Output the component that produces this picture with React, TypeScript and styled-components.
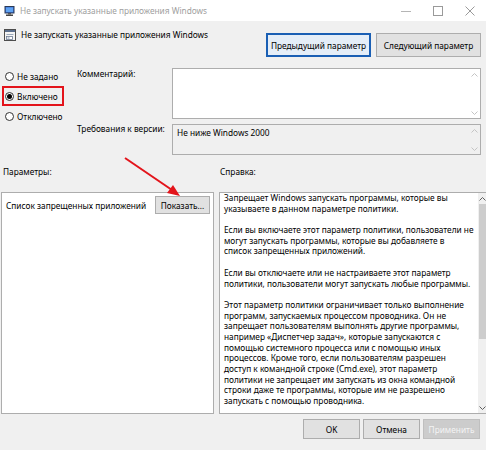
import React from 'react'
import styled, { createGlobalStyle } from 'styled-components'

const GlobalStyle = createGlobalStyle`
  html, body {
    margin: 0;
    padding: 0;
    background: #f0f0f0;
  }
  body {
    font-family: 'Noto Sans', 'Open Sans', sans-serif;
    font-size: 8.3px;
    color: #000;
  }
`

const Window = styled.div`
  position: relative;
  width: 486px;
  height: 450px;
  background: #f0f0f0;
  display: flex;
  flex-direction: column;
  overflow: hidden;
`

const TitleBar = styled.div`
  height: 21px;
  background: #fff;
  display: flex;
  align-items: center;
  padding-left: 4px;
`
const TitleText = styled.span`
  flex: 1;
  margin-left: 5px;
  color: #a0a0a0;
  white-space: nowrap;
`
const WinControls = styled.div`
  display: flex;
  height: 100%;
`
const WinButton = styled.div`
  width: 32px;
  display: flex;
  align-items: center;
  justify-content: center;
`

const Header = styled.div`
  height: 45px;
  display: flex;
  justify-content: space-between;
  padding: 0 5px 0 4px;
`
const HeaderTitle = styled.div`
  display: flex;
  align-items: center;
  gap: 5px;
  height: 13px;
  margin-top: 7px;
  white-space: nowrap;
`
const NavButtons = styled.div`
  display: flex;
  gap: 5px;
  margin-top: 12px;
`
const Button = styled.button<{ $focused?: boolean; $disabled?: boolean; $w: number; $h: number }>`
  width: ${({ $w }) => $w}px;
  height: ${({ $h }) => $h}px;
  padding: 0;
  font: inherit;
  color: ${({ $disabled }) => ($disabled ? '#f4f4f4' : '#000')};
  background: ${({ $focused, $disabled }) => ($disabled ? '#cccccc' : $focused ? '#e5eef8' : '#e1e1e1')};
  border: 1px solid ${({ $focused, $disabled }) => ($disabled ? '#bfbfbf' : $focused ? '#1a5fb4' : '#adadad')};
  box-shadow: ${({ $focused }) => ($focused ? 'inset 0 0 0 1px #1a5fb4' : 'none')};
  white-space: nowrap;
`

const TopSection = styled.div`
  display: flex;
  padding-right: 5px;
`
const RadioGroup = styled.div`
  width: 75px;
  padding-left: 2px;
  display: flex;
  flex-direction: column;
`
const RadioRow = styled.label<{ $marked?: boolean }>`
  height: 20px;
  box-sizing: border-box;
  width: fit-content;
  display: flex;
  align-items: center;
  gap: 3px;
  padding: 0 4px 0 1px;
  border: 2px solid ${({ $marked }) => ($marked ? '#e3141b' : 'transparent')};
  white-space: nowrap;
`
const RadioDot = styled.span<{ $checked?: boolean }>`
  width: 9px;
  height: 9px;
  box-sizing: border-box;
  border-radius: 50%;
  border: 1px solid #333;
  background: #fff;
  display: flex;
  align-items: center;
  justify-content: center;
  &::after {
    content: '';
    width: 5px;
    height: 5px;
    border-radius: 50%;
    background: ${({ $checked }) => ($checked ? '#000' : 'transparent')};
  }
`

const FieldsGrid = styled.div`
  flex: 1;
  display: grid;
  grid-template-columns: 95px 1fr;
  row-gap: 5px;
  padding-top: 2px;
`
const FieldLabel = styled.div<{ $offset: number }>`
  line-height: 11px;
  margin-top: ${({ $offset }) => $offset}px;
  white-space: nowrap;
`
const FieldBox = styled.div<{ $h: number; $readonly?: boolean }>`
  height: ${({ $h }) => $h}px;
  box-sizing: border-box;
  display: flex;
  background: ${({ $readonly }) => ($readonly ? '#f0f0f0' : '#fff')};
  border: 1px solid #adadad;
`
const FieldText = styled.div`
  flex: 1;
  padding: 2px 4px;
  line-height: 11px;
`
const MiniScroll = styled.div`
  width: 12px;
  display: flex;
  flex-direction: column;
  justify-content: space-between;
  align-items: center;
  padding: 4px 0 3px;
`

const LowerSection = styled.div`
  display: grid;
  grid-template-columns: 213px 1fr;
  grid-template-rows: 12px 222px;
  column-gap: 5px;
  row-gap: 14px;
  padding: 11px 5px 0 1px;
`
const SectionLabel = styled.div<{ $indent: number }>`
  padding-left: ${({ $indent }) => $indent}px;
  line-height: 12px;
`
const Panel = styled.div`
  background: #fff;
  border: 1px solid #adadad;
  box-sizing: border-box;
  display: flex;
  flex-direction: column;
  min-height: 0;
`
const ParamRow = styled.div`
  display: flex;
  align-items: center;
  justify-content: space-between;
  padding: 3px 3px 0 4px;
  white-space: nowrap;
`
const HelpPanel = styled(Panel)`
  flex-direction: row;
`
const HelpText = styled.div`
  flex: 1;
  padding: 0 4px;
  line-height: 10.7px;
  overflow: hidden;
`
const HelpLine = styled.div`
  height: 10.7px;
  white-space: nowrap;
`
const ScrollBar = styled.div`
  width: 10px;
  display: flex;
  flex-direction: column;
  align-items: center;
  background: #f0f0f0;
`
const ScrollArrow = styled.div`
  height: 11px;
  display: flex;
  align-items: center;
  justify-content: center;
`
const ScrollTrack = styled.div`
  flex: 1;
  width: 100%;
  display: flex;
  flex-direction: column;
`
const ScrollThumb = styled.div`
  height: 135px;
  margin: 0 1px;
  background: #cdcdcd;
`

const Footer = styled.div`
  display: flex;
  justify-content: flex-end;
  gap: 3px;
  padding: 5px 6px 0 0;
`

const Overlay = styled.svg`
  position: absolute;
  left: 0;
  top: 0;
  pointer-events: none;
`

const Chevron = ({ up, color }: { up?: boolean; color: string }) => (
  <svg width="7" height="4" viewBox="0 0 7 4">
    <path d={up ? 'M0.5 3.5 L3.5 0.5 L6.5 3.5' : 'M0.5 0.5 L3.5 3.5 L6.5 0.5'} fill="none" stroke={color} strokeWidth="1" />
  </svg>
)

const ComputerIcon = () => (
  <svg width="11" height="10" viewBox="0 0 11 10">
    <rect x="1" y="0.5" width="9" height="6.5" fill="#3a6fd8" stroke="#2b3a55" strokeWidth="1" />
    <rect x="2" y="1.5" width="7" height="4.5" fill="#5fa3f2" />
    <rect x="4" y="7" width="3" height="1.5" fill="#555" />
    <rect x="2" y="8.5" width="7" height="1.5" fill="#444" />
  </svg>
)

const PolicyIcon = () => (
  <svg width="12" height="12" viewBox="0 0 12 12">
    <rect x="0.5" y="0.5" width="11" height="11" fill="#f4f4f4" stroke="#4d4d4d" />
    <rect x="1" y="1" width="10" height="2" fill="#5a6e8c" />
    <rect x="2.5" y="5" width="7" height="1" fill="#9aa8bb" />
    <rect x="2.5" y="7.5" width="6" height="3" fill="#fff" stroke="#6b7b93" strokeWidth="0.8" />
    <rect x="3.5" y="8.5" width="2" height="1" fill="#7a8ba6" />
  </svg>
)

const helpParagraphs = [
  ['Запрещает Windows запускать программы, которые вы', 'указываете в данном параметре политики.'],
  [
    'Если вы включаете этот параметр политики, пользователи не',
    'могут запускать программы, которые вы добавляете в',
    'список запрещенных приложений.',
  ],
  ['Если вы отключаете или не настраиваете этот параметр', 'политики, пользователи могут запускать любые программы.'],
  [
    'Этот параметр политики ограничивает только выполнение',
    'программ, запускаемых процессом проводника. Он не',
    'запрещает пользователям выполнять другие программы,',
    'например «Диспетчер задач», которые запускаются с',
    'помощью системного процесса или с помощью иных',
    'процессов.  Кроме того, если пользователям разрешен',
    'доступ к командной строке (Cmd.exe), этот параметр',
    'политики не запрещает им запускать из окна командной',
    'строки даже те программы, которые им не разрешено',
    'запускать с помощью проводника.',
  ],
]

export default function App() {
  return (
    <Window>
      <GlobalStyle />
      <TitleBar>
        <ComputerIcon />
        <TitleText>Не запускать указанные приложения Windows</TitleText>
        <WinControls>
          <WinButton>
            <svg width="10" height="10" viewBox="0 0 10 10">
              <path d="M0 5.5 H10" stroke="#b5b5b5" strokeWidth="1" />
            </svg>
          </WinButton>
          <WinButton>
            <svg width="10" height="10" viewBox="0 0 10 10">
              <rect x="0.5" y="0.5" width="9" height="9" fill="none" stroke="#9a9a9a" strokeWidth="1" />
            </svg>
          </WinButton>
          <WinButton>
            <svg width="10" height="10" viewBox="0 0 10 10">
              <path d="M0.5 0.5 L9.5 9.5 M9.5 0.5 L0.5 9.5" stroke="#9a9a9a" strokeWidth="1" />
            </svg>
          </WinButton>
        </WinControls>
      </TitleBar>

      <Header>
        <HeaderTitle>
          <PolicyIcon />
          <span>Не запускать указанные приложения Windows</span>
        </HeaderTitle>
        <NavButtons>
          <Button $focused $w={105} $h={24}>Предыдущий параметр</Button>
          <Button $w={105} $h={24}>Следующий параметр</Button>
        </NavButtons>
      </Header>

      <TopSection>
        <RadioGroup>
          <RadioRow>
            <RadioDot />
            Не задано
          </RadioRow>
          <RadioRow $marked>
            <RadioDot $checked />
            Включено
          </RadioRow>
          <RadioRow>
            <RadioDot />
            Отключено
          </RadioRow>
        </RadioGroup>
        <FieldsGrid>
          <FieldLabel $offset={0}>Комментарий:</FieldLabel>
          <FieldBox $h={51}>
            <FieldText />
            <MiniScroll>
              <Chevron up color="#c4c4c4" />
              <Chevron color="#c4c4c4" />
            </MiniScroll>
          </FieldBox>
          <FieldLabel $offset={-1}>Требования к версии:</FieldLabel>
          <FieldBox $h={31} $readonly>
            <FieldText>Не ниже Windows 2000</FieldText>
            <MiniScroll>
              <Chevron up color="#c4c4c4" />
              <Chevron color="#c4c4c4" />
            </MiniScroll>
          </FieldBox>
        </FieldsGrid>
      </TopSection>

      <LowerSection>
        <SectionLabel $indent={2}>Параметры:</SectionLabel>
        <SectionLabel $indent={1}>Справка:</SectionLabel>
        <Panel>
          <ParamRow>
            <span>Список запрещенных приложений</span>
            <Button $w={55} $h={18}>Показать...</Button>
          </ParamRow>
        </Panel>
        <HelpPanel>
          <HelpText>
            {helpParagraphs.map((para, i) => (
              <React.Fragment key={i}>
                {i > 0 && <HelpLine />}
                {para.map((line, j) => (
                  <HelpLine key={j}>{line}</HelpLine>
                ))}
              </React.Fragment>
            ))}
          </HelpText>
          <ScrollBar>
            <ScrollArrow>
              <Chevron up color="#606060" />
            </ScrollArrow>
            <ScrollTrack>
              <ScrollThumb />
            </ScrollTrack>
            <ScrollArrow>
              <Chevron color="#606060" />
            </ScrollArrow>
          </ScrollBar>
        </HelpPanel>
      </LowerSection>

      <Footer>
        <Button $w={57} $h={20}>OK</Button>
        <Button $w={57} $h={20}>Отмена</Button>
        <Button $w={57} $h={20} $disabled>Применить</Button>
      </Footer>

      <Overlay width="486" height="450" viewBox="0 0 486 450">
        <line x1="125" y1="158" x2="172" y2="190" stroke="#e3141b" strokeWidth="2" />
        <polygon points="180,196 167,193 173,185" fill="#e3141b" />
      </Overlay>
    </Window>
  )
}
